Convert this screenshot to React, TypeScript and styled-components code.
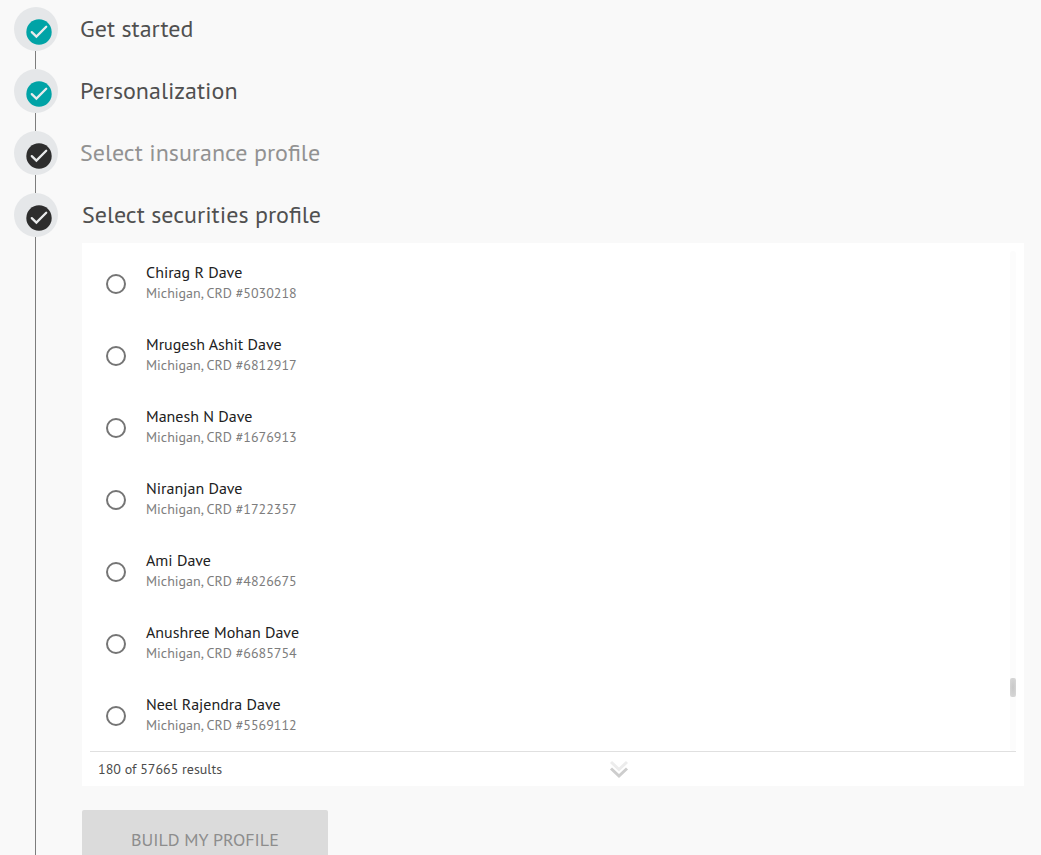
import React from "react";
import styled, { createGlobalStyle } from "styled-components";

const GlobalStyle = createGlobalStyle`
  *, *::before, *::after { box-sizing: border-box; }
  body {
    margin: 0;
    background: #f9f9f9;
    font-family: "PT Sans", "Noto Sans", sans-serif;
  }
`;

const Page = styled.main`
  height: 100vh;
  overflow: hidden;
  padding: 7px 17px 0 14px;
`;

const Steps = styled.ol`
  list-style: none;
  margin: 0;
  padding: 0;
`;

const Step = styled.li`
  display: flex;
  min-height: 62px;
`;

const Rail = styled.div`
  display: flex;
  flex-direction: column;
  flex: 0 0 44px;

  &::after {
    content: "";
    flex: 1;
    width: 1px;
    margin-left: 21px;
    background: #7d7d7d;
  }
`;

const Badge = styled.svg`
  display: block;
  flex: none;
  width: 44px;
  height: 44px;
`;

const StepBody = styled.div<{ $open?: boolean }>`
  flex: 1;
  min-width: 0;
  padding-left: ${(p) => (p.$open ? 24 : 22)}px;
  padding-bottom: ${(p) => (p.$open ? 24 : 0)}px;
`;

const StepTitle = styled.h2<{ $muted?: boolean }>`
  margin: 0;
  font-size: 24px;
  font-weight: 400;
  line-height: 44px;
  color: ${(p) => (p.$muted ? "#929292" : "#505050")};
`;

const Panel = styled.section`
  margin: 6px 0 24px;
  padding: 5px 8px 0;
  background: #fff;
`;

const Results = styled.div`
  display: flex;
`;

const ProfileList = styled.div`
  flex: 1;
`;

const Profile = styled.label`
  display: flex;
  align-items: center;
  gap: 20px;
  height: 72px;
  padding-left: 16px;
  cursor: pointer;
`;

const Radio = styled.input`
  appearance: none;
  width: 20px;
  height: 20px;
  margin: 0;
  border: 2px solid #757575;
  border-radius: 50%;

  &:checked {
    background: radial-gradient(#00a3a6 0 5px, transparent 6px);
    border-color: #00a3a6;
  }
`;

const ProfileText = styled.span`
  display: flex;
  flex-direction: column;
  padding-bottom: 4px;
`;

const Name = styled.span`
  font-size: 16px;
  line-height: 22px;
  color: #212121;
`;

const Detail = styled.span`
  font-size: 14px;
  line-height: 20px;
  color: #7d7d7d;
`;

const Track = styled.div`
  flex: 0 0 6px;
  margin: 3px 0 1px;
  padding-top: 427px;
  border-radius: 3px;
  background: #fcfcfc;
`;

const Thumb = styled.div`
  height: 19px;
  border-radius: 2px;
  background: radial-gradient(#c8c8c8, #dadada);
`;

const Footer = styled.footer`
  display: grid;
  grid-template-columns: 56% 1fr;
  align-items: center;
  height: 35px;
  margin-top: -1px;
  border-top: 1px solid #e0e0e0;
  background: #fff;
`;

const Count = styled.span`
  padding-left: 8px;
  font-size: 14px;
  line-height: 20px;
  color: #4c4c4c;
`;

const MoreButton = styled.button`
  display: block;
  justify-self: start;
  width: 20px;
  height: 20px;
  padding: 0;
  border: 0;
  background: none;
  cursor: pointer;

  svg { display: block; }
`;

const BuildButton = styled.button`
  height: 60px;
  padding: 0 49px;
  border: 0;
  border-radius: 2px;
  background: #dbdbdb;
  color: #8d8d8d;
  font-family: inherit;
  font-size: 18px;
  line-height: 24px;
`;

const profiles = [
  { name: "Chirag R Dave", crd: "5030218" },
  { name: "Mrugesh Ashit Dave", crd: "6812917" },
  { name: "Manesh N Dave", crd: "1676913" },
  { name: "Niranjan Dave", crd: "1722357" },
  { name: "Ami Dave", crd: "4826675" },
  { name: "Anushree Mohan Dave", crd: "6685754" },
  { name: "Neel Rajendra Dave", crd: "5569112" },
];

function StepBadge({ color }: { color: string }) {
  return (
    <Badge viewBox="0 0 44 44" aria-hidden="true">
      <circle cx="22" cy="22" r="22" fill="#e5e7e9" />
      <circle cx="25" cy="25" r="12.7" fill={color} />
      <path
        d="M17.8 25.1 22.4 29.6 32.2 19.8"
        fill="none"
        stroke="#e9ebec"
        strokeWidth="2.3"
        strokeLinecap="round"
      />
    </Badge>
  );
}

const TEAL = "#00a3a6";
const DARK = "#2d2d2d";

export default function App() {
  return (
    <>
      <GlobalStyle />
      <Page>
        <Steps>
          <Step>
            <Rail><StepBadge color={TEAL} /></Rail>
            <StepBody><StepTitle>Get started</StepTitle></StepBody>
          </Step>
          <Step>
            <Rail><StepBadge color={TEAL} /></Rail>
            <StepBody><StepTitle>Personalization</StepTitle></StepBody>
          </Step>
          <Step>
            <Rail><StepBadge color={DARK} /></Rail>
            <StepBody><StepTitle $muted>Select insurance profile</StepTitle></StepBody>
          </Step>
          <Step>
            <Rail><StepBadge color={DARK} /></Rail>
            <StepBody $open>
              <StepTitle>Select securities profile</StepTitle>
              <Panel>
                <Results>
                  <ProfileList role="radiogroup" aria-label="Securities profiles">
                    {profiles.map(({ name, crd }) => (
                      <Profile key={crd}>
                        <Radio type="radio" name="profile" value={crd} />
                        <ProfileText>
                          <Name>{name}</Name>
                          <Detail>Michigan, CRD #{crd}</Detail>
                        </ProfileText>
                      </Profile>
                    ))}
                  </ProfileList>
                  <Track><Thumb /></Track>
                </Results>
                <Footer>
                  <Count>180 of 57665 results</Count>
                  <MoreButton type="button" aria-label="Load more results">
                    <svg width="20" height="20" viewBox="0 0 20 20" fill="none" strokeWidth="3">
                      <path d="M2 3 10 10.5 18 3" stroke="#ececec" />
                      <path d="M2 9.5 10 17 18 9.5" stroke="#cdcdcd" />
                    </svg>
                  </MoreButton>
                </Footer>
              </Panel>
              <BuildButton type="button" disabled>BUILD MY PROFILE</BuildButton>
            </StepBody>
          </Step>
        </Steps>
      </Page>
    </>
  );
}
